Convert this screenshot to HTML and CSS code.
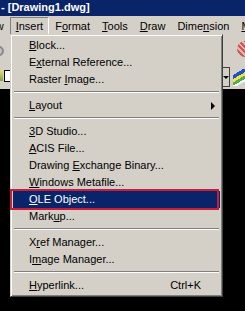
FILE: index.html
```html
<!DOCTYPE html>
<html>
<head>
    <title>Drawing1.dwg</title>
    <link rel="stylesheet" href="styles.css">
</head>
<body>
    <div class="titlebar">- [Drawing1.dwg]</div>
    <div class="menubar">
        <span class="mb-item first">View</span>
        <span class="mb-item pressed"><u>I</u>nsert</span>
        <span class="mb-item">F<u>o</u>rmat</span>
        <span class="mb-item"><u>T</u>ools</span>
        <span class="mb-item"><u>D</u>raw</span>
        <span class="mb-item">Dime<u>n</u>sion</span>
        <span class="mb-item"><u>M</u>odify</span>
    </div>
    <div class="toolbars">
        <div class="tb-row">
            <span class="tb-round"></span>
            <span class="tb-red"></span>
        </div>
        <div class="tb-row">
            <div class="tb-group">
                <span class="tb-layer"></span>
                <span class="tb-box"></span>
            </div>
            <div class="tb-group">
                <span class="tb-combo"><span class="tb-combo-arrow"></span></span>
                <span class="tb-rainbow"></span>
            </div>
        </div>
    </div>
    <div class="workspace"></div>

    <div class="dropdown">
        <div class="item"><span><u>B</u>lock...</span></div>
        <div class="item"><span>E<u>x</u>ternal Reference...</span></div>
        <div class="item"><span>Raster <u>I</u>mage...</span></div>
        <div class="sep"></div>
        <div class="item"><span><u>L</u>ayout</span><span class="arrow"></span></div>
        <div class="sep"></div>
        <div class="item"><span><u>3</u>D Studio...</span></div>
        <div class="item"><span><u>A</u>CIS File...</span></div>
        <div class="item"><span>Drawing <u>E</u>xchange Binary...</span></div>
        <div class="item"><span><u>W</u>indows Metafile...</span></div>
        <div class="item active"><span><u>O</u>LE Object...</span></div>
        <div class="item"><span>Mark<u>u</u>p...</span></div>
        <div class="sep"></div>
        <div class="item"><span>X<u>r</u>ef Manager...</span></div>
        <div class="item"><span>I<u>m</u>age Manager...</span></div>
        <div class="sep"></div>
        <div class="item"><span><u>H</u>yperlink...</span><span class="shortcut">Ctrl+K</span></div>
    </div>
</body>
</html>
```

FILE: styles.css
```css
* {
    margin: 0px;
    padding: 0px;
    box-sizing: border-box;
}
body {
    position: relative;
    width: 245px;
    height: 311px;
    overflow: hidden;
    background: #000;
    font-family: "Liberation Sans", Arial, sans-serif;
    font-size: 11px;
    color: #000;
}
u {
    text-underline-offset: 1px;
}
.titlebar {
    height: 16px;
    line-height: 15px;
    padding-left: 1px;
    background: #0a246a;
    color: #fff;
    font-weight: bold;
    white-space: nowrap;
}
.menubar {
    display: flex;
    height: 19px;
    background: #d4d0c8;
    white-space: nowrap;
    overflow: hidden;
}
.menubar .mb-item {
    flex: none;
    height: 18px;
    margin-top: 1px;
    padding: 0 5px;
    line-height: 17px;
    border: 1px solid transparent;
}
.menubar .first {
    margin-left: -26px;
}
.menubar .pressed {
    border-color: #808080 #fff #fff #808080;
}
.toolbars {
    height: 54px;
    background: #d4d0c8;
}
.tb-row {
    display: flex;
    justify-content: space-between;
    align-items: center;
    height: 27px;
}
.tb-group {
    display: flex;
    align-items: center;
}
.tb-round {
    width: 10px;
    height: 10px;
    margin-left: -6px;
    margin-top: 5px;
    border-radius: 50%;
    border: 2px solid #8a8a8a;
    background: #c0c0c0;
}
.tb-red {
    width: 16px;
    height: 16px;
    margin-right: -8px;
    border-radius: 50%;
    background: repeating-linear-gradient(45deg, #c85a5a 0 2px, #e6b4b0 2px 4px);
}
.tb-layer {
    width: 3px;
    height: 11px;
    background: linear-gradient(#e8e070, #80a040);
}
.tb-box {
    width: 8px;
    height: 12px;
    margin-left: 1px;
    border: 1px solid #000;
    background: #fff;
}
.tb-combo {
    display: flex;
    align-items: center;
    justify-content: center;
    width: 8px;
    height: 20px;
    margin-top: 3px;
    border: 1px solid #404040;
    border-left: none;
    background: #d4d0c8;
}
.tb-combo-arrow {
    width: 0;
    height: 0;
    border-top: 3px solid #000;
    border-left: 3px solid transparent;
    border-right: 3px solid transparent;
}
.tb-rainbow {
    width: 12px;
    height: 17px;
    margin-left: 3px;
    margin-top: 3px;
    background: linear-gradient(150deg, #d4d0c8 0 25%, #2050c8 25% 42%, #f0e050 42% 56%, #50b048 56% 70%, #fff 70% 80%, #d4d0c8 80%);
}
.workspace {
    height: 222px;
    background: #000;
}
.dropdown {
    position: absolute;
    left: 10px;
    top: 34px;
    width: 213px;
    padding: 2px;
    background: #d4d0c8;
    border: 1px solid;
    border-color: #d4d0c8 #404040 #404040 #d4d0c8;
    box-shadow: inset 1px 1px #fff, inset -1px -1px #808080;
}
.dropdown .item {
    display: flex;
    justify-content: space-between;
    align-items: center;
    height: 17px;
    line-height: 17px;
    padding-left: 16px;
    white-space: nowrap;
}
.dropdown .item.active {
    position: relative;
    background: #0a246a;
    color: #fff;
}
.dropdown .item.active::after {
    content: "";
    position: absolute;
    left: -3px;
    right: 1px;
    top: -2px;
    bottom: -2px;
    border: 2px solid #c81e3c;
}
.dropdown .sep {
    height: 9px;
    padding-top: 3px;
}
.dropdown .sep::before {
    content: "";
    display: block;
    margin: 0 1px;
    border-top: 1px solid #808080;
    border-bottom: 1px solid #fff;
}
.dropdown .arrow {
    width: 0;
    height: 0;
    margin-right: 5px;
    border-left: 4px solid #000;
    border-top: 4px solid transparent;
    border-bottom: 4px solid transparent;
}
.dropdown .shortcut {
    padding-right: 19px;
}
```
